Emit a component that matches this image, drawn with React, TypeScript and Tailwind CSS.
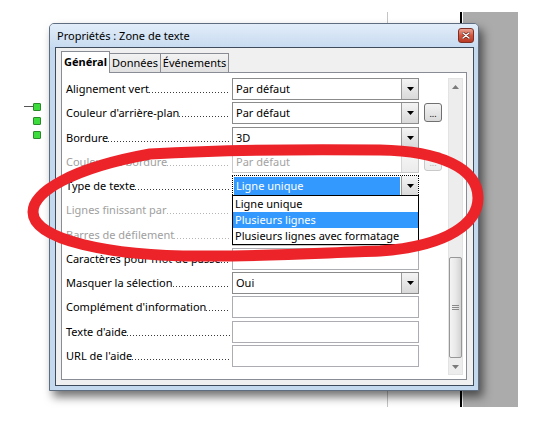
import clsx from 'clsx';

type Row = {
  label: string;
  kind: 'combo' | 'text';
  value?: string;
  disabled?: boolean;
  more?: boolean;
  open?: boolean;
};

const ROWS: Row[] = [
  { label: 'Alignement vert', kind: 'combo', value: 'Par défaut' },
  { label: "Couleur d'arrière-plan", kind: 'combo', value: 'Par défaut', more: true },
  { label: 'Bordure', kind: 'combo', value: '3D' },
  { label: 'Couleur de bordure', kind: 'combo', value: 'Par défaut', more: true, disabled: true },
  { label: 'Type de texte', kind: 'combo', value: 'Ligne unique', open: true },
  { label: 'Lignes finissant par', kind: 'combo', value: '', disabled: true },
  { label: 'Barres de défilement', kind: 'combo', value: '', disabled: true },
  { label: 'Caractères pour mot de passe', kind: 'text' },
  { label: 'Masquer la sélection', kind: 'combo', value: 'Oui' },
  { label: "Complément d'information", kind: 'text' },
  { label: "Texte d'aide", kind: 'text' },
  { label: "URL de l'aide", kind: 'text' },
];

const OPTIONS = ['Ligne unique', 'Plusieurs lignes', 'Plusieurs lignes avec formatage'];

function Arrow({ color = '#000' }: { color?: string }) {
  return (
    <svg width="7" height="4" viewBox="0 0 7 4" aria-hidden>
      <path d="M0 0h7L3.5 4z" fill={color} />
    </svg>
  );
}

function Combo({ row }: { row: Row }) {
  return (
    <div
      className={clsx(
        'relative flex h-[22px] w-[187px] border bg-white',
        row.disabled ? 'border-[#c9c9c9]' : 'border-[#8b8b8b]',
        row.open && 'border-dotted border-black'
      )}
    >
      <div className="flex flex-1 items-center p-[1px]">
        <span
          className={clsx(
            'flex h-full w-full items-center pl-[2px]',
            row.disabled && 'text-[#a3a3a3]',
            row.open && 'bg-[#3399ff] text-white'
          )}
        >
          {row.value}
        </span>
      </div>
      <div
        className={clsx(
          'flex w-[17px] items-center justify-center border-l bg-gradient-to-b',
          row.disabled
            ? 'border-[#d6d6d6] from-[#f6f6f6] to-[#ebebeb]'
            : 'border-[#9a9a9a] from-[#f4f4f4] to-[#d9d9d9]'
        )}
      >
        {!row.disabled && <Arrow />}
      </div>
      {row.open && (
        <div className="absolute left-[-1px] top-[19px] z-20 flex w-[187px] flex-col border border-black bg-white">
          {OPTIONS.map((opt, i) => (
            <div
              key={opt}
              className={clsx(
                'flex h-[16px] items-center pl-[2px]',
                i === 1 && 'bg-[#3399ff] text-white'
              )}
            >
              {opt}
            </div>
          ))}
        </div>
      )}
    </div>
  );
}

function MoreButton({ disabled }: { disabled?: boolean }) {
  return (
    <div
      className={clsx(
        'ml-[5px] mt-[1px] flex h-[19px] w-[18px] items-end justify-center self-start rounded-[3px] border bg-gradient-to-b pb-[3px] text-[9px] leading-none',
        disabled
          ? 'border-[#c9c9c9] from-[#f7f7f7] to-[#ececec] text-[#b0b0b0]'
          : 'border-[#707070] from-[#f3f3f3] to-[#dadada] text-black'
      )}
    >
      ...
    </div>
  );
}

function Scrollbar() {
  return (
    <div className="mt-[5px] flex h-[297px] w-[15px] flex-col border border-[#e3e3e3] bg-[#ededed]">
      <div className="flex h-[15px] items-center justify-center">
        <svg width="7" height="4" viewBox="0 0 7 4" aria-hidden>
          <path d="M0 4h7L3.5 0z" fill="#7a7a7a" />
        </svg>
      </div>
      <div className="flex flex-1 flex-col justify-end pb-[1px]">
        <div className="flex h-[101px] flex-col items-center justify-center gap-[1px] rounded-[2px] border border-[#979797] bg-gradient-to-r from-[#f4f4f4] via-[#e9e9e9] to-[#d3d3d3]">
          <div className="h-[1px] w-[7px] bg-[#8a8a8a]" />
          <div className="h-[1px] w-[7px] bg-[#8a8a8a]" />
          <div className="h-[1px] w-[7px] bg-[#8a8a8a]" />
        </div>
      </div>
      <div className="flex h-[15px] items-center justify-center">
        <Arrow color="#7a7a7a" />
      </div>
    </div>
  );
}

function Dialog() {
  return (
    <div className="absolute left-[49px] top-[23px] flex h-[368px] w-[430px] flex-col rounded-t-[5px] border border-[#5e6e80] bg-[#c4d8ee] shadow-[4px_6px_10px_rgba(0,0,0,0.55)]">
      <div className="flex h-[23px] items-center rounded-t-[4px] bg-gradient-to-b from-[#e2edf9] to-[#c8dbf0] pl-[7px] pr-[4px]">
        <span className="text-[11px] text-black">Propriétés : Zone de texte</span>
        <div className="ml-auto flex h-[15px] w-[16px] items-center justify-center rounded-[3px] border border-[#7d2f25] bg-gradient-to-b from-[#e9a193] via-[#d2553f] to-[#b93a24]">
          <svg width="8" height="7" viewBox="0 0 8 7" aria-hidden>
            <path d="M1 1l6 5M7 1L1 6" stroke="#5a1a10" strokeWidth="2.6" strokeLinecap="round" />
            <path d="M1 1l6 5M7 1L1 6" stroke="#fff" strokeWidth="1.5" strokeLinecap="round" />
          </svg>
        </div>
      </div>
      <div className="mb-[4px] ml-[5px] mr-[4px] flex flex-1 flex-col border border-[#3d4b5a] bg-[#f0f0f0] pb-[5px] pl-[5px] pr-[6px] pt-[3px]">
        <div className="flex h-[21px] items-end text-[11px]">
          <div className="relative z-10 -mb-px flex h-[22px] w-[49px] items-center justify-center border border-b-0 border-[#898c95] bg-white pb-[1px] font-bold">
            Général
          </div>
          <div className="flex h-[19px] w-[51px] items-center justify-center border border-b-0 border-l-0 border-[#898c95] bg-gradient-to-b from-[#f3f3f3] to-[#e1e1e1]">
            Données
          </div>
          <div className="flex h-[19px] w-[68px] items-center justify-center border border-b-0 border-l-0 border-[#898c95] bg-gradient-to-b from-[#f3f3f3] to-[#e1e1e1]">
            Événements
          </div>
        </div>
        <div className="flex flex-1 border border-[#898c95] bg-white">
          <div className="flex w-[386px] flex-col gap-[2.27px] pl-[4px] pt-[5px]">
            {ROWS.map((row) => (
              <div key={row.label} className="flex h-[22px] items-center">
                <div
                  className={clsx(
                    'flex w-[164px] items-baseline whitespace-nowrap',
                    row.disabled ? 'text-[#a0a0a0]' : 'text-black'
                  )}
                >
                  <span className="shrink-0">{row.label}</span>
                  <span
                    className={clsx(
                      'h-[1px] flex-1 bg-[length:3px_1px] bg-repeat-x',
                      row.disabled
                        ? 'bg-[linear-gradient(to_right,#b4b4b4_1px,transparent_1px)]'
                        : 'bg-[linear-gradient(to_right,#3a3a3a_1px,transparent_1px)]'
                    )}
                  />
                </div>
                <div className="ml-[2px]">
                  {row.kind === 'combo' ? (
                    <Combo row={row} />
                  ) : (
                    <div className="h-[22px] w-[187px] border border-[#abadb3] bg-white" />
                  )}
                </div>
                {row.more && <MoreButton disabled={row.disabled} />}
              </div>
            ))}
          </div>
          <Scrollbar />
        </div>
      </div>
    </div>
  );
}

export default function App() {
  return (
    <div className="relative h-[424px] w-[536px] overflow-hidden bg-white font-['Noto_Sans',sans-serif] text-[11px] leading-[14px] text-black">
      <div className="absolute left-[463px] top-[12px] h-[395px] w-[55px] bg-[#ababab]" />
      <div className="absolute left-[460px] top-[12px] h-[395px] w-[2px] bg-black" />
      <div className="absolute left-[387px] top-[12px] h-[395px] w-[1px] bg-[#c4c4c4]" />
      <div className="absolute left-[24px] top-[106px] h-[1px] w-[10px] bg-[#555]" />
      {[103, 117, 131].map((y) => (
        <div
          key={y}
          className="absolute left-[33px] h-[8px] w-[8px] rounded-[1px] border border-[#2a8a2a] bg-[#3ddc3d]"
          style={{ top: y }}
        />
      ))}
      <Dialog />
      <svg className="pointer-events-none absolute inset-0 z-30" width="536" height="424" aria-hidden>
        <path
          d="M33 212C33 192 72 168 150 154C220 150 300 149 380 150C440 151 478 168 478 198C478 222 450 246 380 251C320 253 250 257 200 256C110 256 33 240 33 212Z"
          fill="none"
          stroke="#ec2329"
          strokeWidth="11"
        />
      </svg>
    </div>
  );
}
